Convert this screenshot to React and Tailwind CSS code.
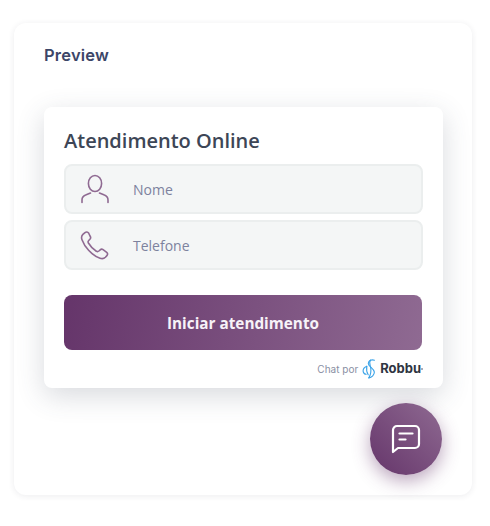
import React from "react";

function UserIcon() {
  return (
    <svg width="30" height="30" viewBox="0 0 30 30" fill="none" stroke="#8f6a92" strokeWidth="1.6" strokeLinecap="round" strokeLinejoin="round">
      <ellipse cx="15" cy="9.500" rx="6.600" ry="8" />
      <path d="M2 28.500v-2.600c0-2.600 1.600-4 3.600-4.800l4.900-2.100" />
      <path d="M28 28.500v-2.600c0-2.600-1.600-4-3.600-4.800l-4.900-2.100" />
    </svg>
  );
}

function PhoneIcon() {
  return (
    <svg width="30" height="30" viewBox="0 0 30 30" fill="none" stroke="#8f6a92" strokeWidth="1.6" strokeLinecap="round" strokeLinejoin="round">
      <path d="M5 2.600 2.900 4.400C1.400 5.800 1.300 7.800 2 9.700c1.300 3.600 3.500 7.200 6.600 10.600 3.400 3.700 7.600 6.700 11.400 8 2.200.7 4 .4 5.400-1l1.500-1.700c1-1.100.9-2.300-.2-3.200l-3.600-2.700c-1-.7-2-.7-2.900.1l-1.300 1.200c-.8.7-1.700.8-2.600.2-3-1.900-6-5-7.900-8.200-.5-.9-.4-1.800.3-2.500l1.200-1.200c.9-.9 1-1.900.3-3L8.600 3c-.9-1.200-2.400-1.400-3.600-.4Z" />
    </svg>
  );
}

function RobbuMark() {
  return (
    <svg width="14" height="20" viewBox="0 0 14 20" fill="none" stroke="#3aa3e8" strokeWidth="1.100" strokeLinecap="round" strokeLinejoin="round">
      <path d="M12.500 1.200C9.500.2 6.500 1.500 6.300 4.300c-.2 3 5.600 5 6 8.600.3 3-2.600 5.600-5.500 6" />
      <path d="M8.500 1.200C6.800 3 8 5.600 8.600 8.200c.5 2.600.8 6.500-1.800 10.700" />
      <path d="M4.800 7.200C2.200 8.300.8 10.400 1.200 12.600c.3 1.600 1.500 2.600 3 2.700" />
      <path d="M4.800 7.200c-.5 2.800-.2 6 1.400 8.600" />
    </svg>
  );
}

function ChatIcon() {
  return (
    <svg width="30" height="30" viewBox="0 0 30 30" fill="none" stroke="#ffffff" strokeWidth="2.200" strokeLinecap="round" strokeLinejoin="round">
      <path d="M2 28V6A4 4 0 0 1 6 2h18a4 4 0 0 1 4 4v14a4 4 0 0 1-4 4H7Z" />
      <path d="M8.500 9.500h13" />
      <path d="M8.500 15.500h6" />
    </svg>
  );
}

function Field({ icon, label }) {
  return (
    <div className="flex h-[50px] items-center rounded-lg border-2 border-[#ebeeee] bg-[#f4f6f6]">
      <div className="ml-[14px] flex w-[30px] items-center justify-center">{icon}</div>
      <span className="ml-[23px] mt-[2px] text-sm text-[#7d829e]" style={{ fontFamily: '"Open Sans", sans-serif' }}>{label}</span>
    </div>
  );
}

export default function App() {
  return (
    <div className="relative h-[526px] w-[490px] overflow-hidden bg-white pl-[14px] pt-[23px]">
      <div className="h-[472px] w-[458px] rounded-xl bg-white px-[30px] pt-[21px] shadow-[0_1px_6px_rgba(40,45,70,0.09)]">
        <h2 className="text-[16.5px] leading-[22px] font-semibold tracking-[0.2px] text-[#3c4668]" style={{ fontFamily: 'Inter, sans-serif' }}>Preview</h2>
        <div className="mt-[41px] w-[399px] rounded-lg bg-white px-5 pt-[20px] shadow-[0_8px_28px_rgba(60,68,90,0.2)]">
          <h1 className="text-xl leading-[28px] font-semibold text-[#3d4656]" style={{ fontFamily: '"Open Sans", sans-serif' }}>Atendimento Online</h1>
          <div className="mt-[9px] flex flex-col gap-[6px]">
            <Field icon={<UserIcon />} label="Nome" />
            <Field icon={<PhoneIcon />} label="Telefone" />
          </div>
          <button className="mt-[25px] flex h-[55px] w-[358px] items-center justify-center rounded-lg bg-[linear-gradient(100deg,#65356a,#8f6a92)] pt-[2px] text-[15.3px] font-bold text-[#f7f2f8]" style={{ fontFamily: '"Open Sans", sans-serif' }}>
            Iniciar atendimento
          </button>
          <div className="flex h-[38px] items-center justify-end">
            <span className="mr-[4px] text-[10px] text-[#8a8fa3]" style={{ fontFamily: 'Inter, sans-serif' }}>Chat por</span>
            <RobbuMark />
            <span className="ml-[4px] text-[13px] font-bold text-[#2f3542]" style={{ fontFamily: 'Inter, sans-serif' }}>Robbu</span>
            <span className="h-[2px] w-[2px] rounded-full bg-[#8a8fa3]" />
          </div>
        </div>
      </div>
      <button className="absolute left-[370px] top-[403px] flex h-[72px] w-[72px] items-center justify-center rounded-full bg-gradient-to-tr from-[#65356a] to-[#8f6a92] shadow-[0_6px_18px_rgba(101,53,106,0.45)]">
        <ChatIcon />
      </button>
    </div>
  );
}
